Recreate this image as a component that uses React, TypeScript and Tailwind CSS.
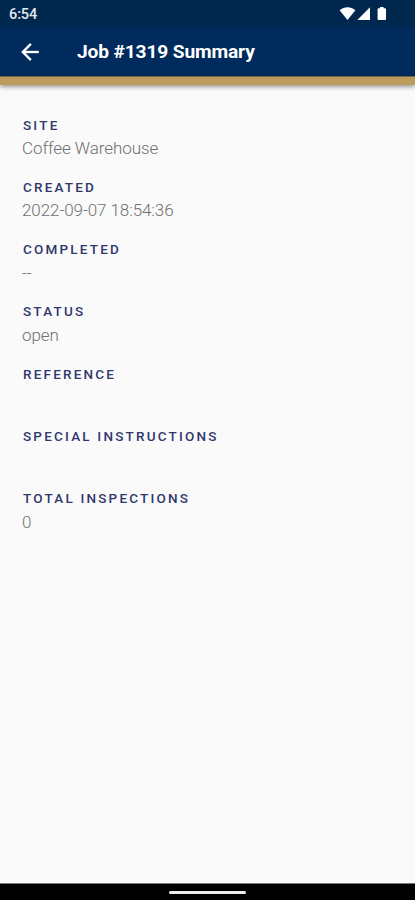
type Field = { label: string; value: string };

const fields: Field[] = [
  { label: 'SITE', value: 'Coffee Warehouse' },
  { label: 'CREATED', value: '2022-09-07 18:54:36' },
  { label: 'COMPLETED', value: '--' },
  { label: 'STATUS', value: 'open' },
  { label: 'REFERENCE', value: '' },
  { label: 'SPECIAL INSTRUCTIONS', value: '' },
  { label: 'TOTAL INSPECTIONS', value: '0' },
];

function StatusBar() {
  return (
    <div className="flex h-[27px] shrink-0 items-center justify-between bg-[#00284f] pl-[9px] pr-[28px] text-white">
      <span className="whitespace-nowrap pt-[2px] text-[14.5px] font-medium leading-[25px] tracking-[-0.1px] text-[#e4e9f0]">6:54</span>
      <svg width="48" height="16" viewBox="0 0 48 16" fill="currentColor" aria-hidden="true">
        <path d="M0.6 4.2C5.2 0.1 11.8 0.1 16.4 4.2L8.5 14Z" />
        <path d="M31 1.3V14H18.3Z" />
        <path d="M41 1h3.6v1.3h1.4q1 0 1 1V13q0 1-1 1h-6.4q-1 0-1-1V3.3q0-1 1-1h1.4Z" />
      </svg>
    </div>
  );
}

function Header() {
  return (
    <header className="flex h-[49px] shrink-0 items-center bg-[#002b5c] pl-[17px] text-white">
      <svg width="26" height="26" viewBox="0 0 24 24" fill="currentColor" stroke="currentColor" strokeWidth="0.3" aria-hidden="true">
        <path d="M20 11H7.83l5.59-5.59L12 4l-8 8 8 8 1.41-1.41L7.83 13H20v-2z" />
      </svg>
      <h1 className="ml-[34px] whitespace-nowrap text-[19.2px] font-bold leading-[49px] tracking-[-0.15px]">Job #1319 Summary</h1>
    </header>
  );
}

export default function App() {
  return (
    <div className="flex h-[900px] w-full flex-col overflow-hidden bg-[#fafafa] font-['Roboto',sans-serif]">
      <StatusBar />
      <Header />
      <div className="h-[9px] shrink-0 border-t border-[#70654f] bg-[#bc9b5b] shadow-[0_2px_4px_rgba(0,0,0,0.4)]" />
      <main className="flex-1 pl-[22px] pt-[30.5px]">
        {fields.map((field) => (
          <section key={field.label} className="h-[62.3px]">
            <h2 className="whitespace-nowrap pl-px text-[13.5px] font-medium leading-[18px] tracking-[2.2px] text-[#30376d]">{field.label}</h2>
            <p className="whitespace-nowrap pt-[3.5px] text-[17px] font-light leading-[22px] tracking-[-0.08px] text-[#707070]">{field.value}</p>
          </section>
        ))}
      </main>
      <footer className="flex h-[17px] shrink-0 items-center justify-center border-t border-[#777777] bg-black">
        <div className="h-[3px] w-[77px] rounded-full bg-[#eeeeee]" />
      </footer>
    </div>
  );
}
